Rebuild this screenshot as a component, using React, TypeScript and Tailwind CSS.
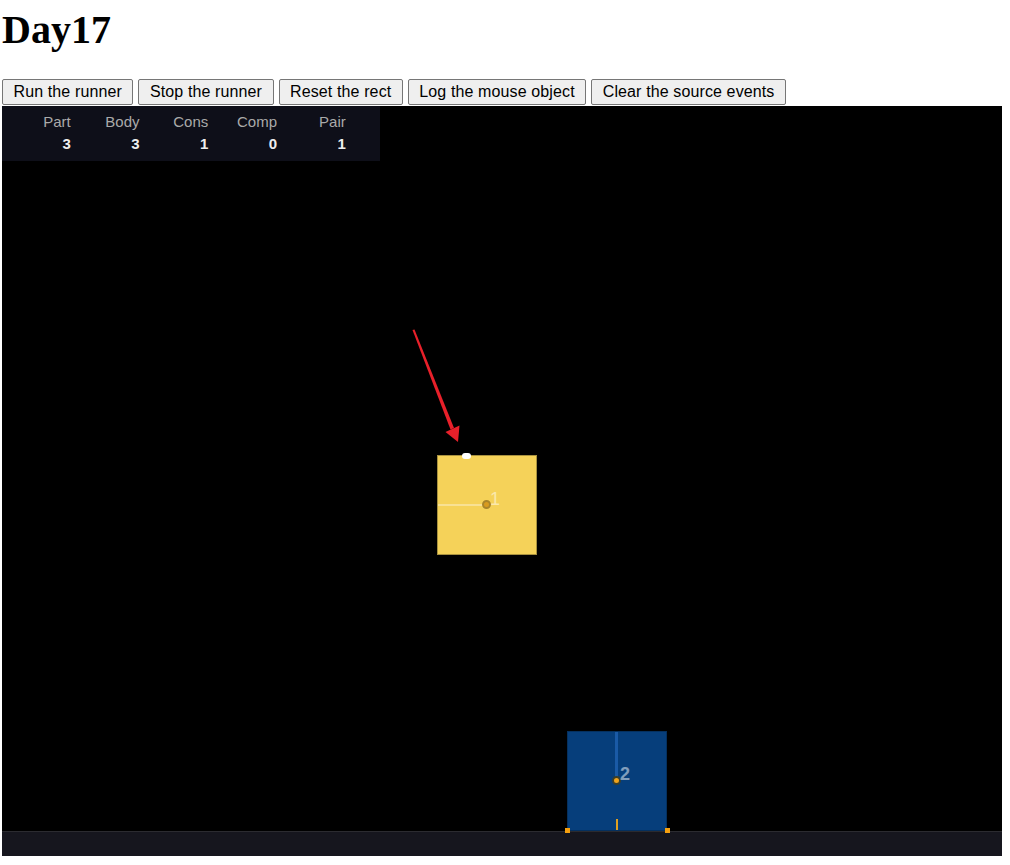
import React from "react";

const buttons = [
  "Run the runner",
  "Stop the runner",
  "Reset the rect",
  "Log the mouse object",
  "Clear the source events",
];

const stats: [string, string][] = [
  ["Part", "3"],
  ["Body", "3"],
  ["Cons", "1"],
  ["Comp", "0"],
  ["Pair", "1"],
];

export default function App() {
  return (
    <div className="bg-white pl-[2px] pt-[7px] text-black">
      <h1
        className="m-0 text-[40px] font-bold leading-[46px] text-black"
        style={{ fontFamily: '"Liberation Serif", "Times New Roman", serif' }}
      >
        Day17
      </h1>
      <div
        className="mt-[26px] mb-[1px] flex gap-[5px]"
        style={{ fontFamily: '"Liberation Sans", Arial, sans-serif' }}
      >
        {buttons.map((b) => (
          <button
            key={b}
            className="flex h-[26px] items-center rounded-[2px] border border-[#767676] bg-[#efefef] px-[10.5px] pb-[1px] text-[16px] leading-[18px] tracking-[0.12px] text-black"
          >
            {b}
          </button>
        ))}
      </div>
      <div
        className="relative flex h-[750px] w-[1000px] flex-col overflow-hidden bg-black"
        style={{ fontFamily: '"Liberation Sans", Arial, sans-serif' }}
      >
        {/* stats panel */}
        <div className="flex h-[55px] w-[378px] bg-[#0e0f19] pt-[8px]">
          {stats.map(([k, v]) => (
            <div key={k} className="flex w-[68.75px] flex-col items-end text-[15px] leading-[15px]">
              <span className="text-[#aaaaaa]">{k}</span>
              <span className="mt-[7px] font-bold text-[#eeeeee]">{v}</span>
            </div>
          ))}
        </div>
        <div className="flex-1" />
        {/* ground */}
        <div className="h-[25px] border-t border-[#2b2b30] bg-[#16161e]" />

        {/* yellow body */}
        <div className="absolute left-[435px] top-[349px] h-[100px] w-[100px] border border-[#a8913f] bg-[#f5d259]">
          <div className="absolute left-0 top-[48px] h-[2px] w-[50px] bg-[rgba(255,255,255,0.35)]" />
          <div className="absolute left-[44px] top-[44px] h-[9px] w-[9px] rounded-full border-2 border-[#a9852a] bg-[#d89b1f]" />
          <span className="absolute right-[36px] top-[34px] text-[18px] leading-[18px] text-[rgba(255,255,255,0.5)]">1</span>
        </div>

        {/* mouse dot */}
        <div className="absolute left-[460px] top-[347px] h-[6px] w-[9px] rounded-full bg-white" />

        {/* blue body */}
        <div className="absolute left-[565px] top-[625px] h-[100px] w-[100px] border border-[#05305e] bg-[#063e7b]">
          <div className="absolute left-[47px] top-0 h-[50px] w-[3px] bg-[#1a5aa6]" />
          <div className="absolute left-[44px] top-[44px] h-[9px] w-[9px] rounded-full border-2 border-[#3b3f2a] bg-[#f0a31c]" />
          <span className="absolute right-[36px] top-[33px] text-[18px] font-bold leading-[18px] text-[rgba(255,255,255,0.5)]">2</span>
          <div className="absolute bottom-0 left-[48px] h-[11px] w-[2px] bg-[#e0a020]" />
        </div>

        {/* contact points */}
        <div className="absolute left-[563px] top-[722px] h-[5px] w-[5px] bg-[#f5a00f]" />
        <div className="absolute left-[663px] top-[722px] h-[5px] w-[5px] bg-[#f5a00f]" />

        {/* red annotation arrow */}
        <svg className="absolute left-0 top-0" width="1000" height="750">
          <polygon points="410.5,224 412.5,223.5 452,322 448.5,323.5" fill="#e8202a" />
          <polygon points="456,336 443.5,326 457.5,319.5" fill="#e8202a" />
        </svg>
      </div>
    </div>
  );
}
